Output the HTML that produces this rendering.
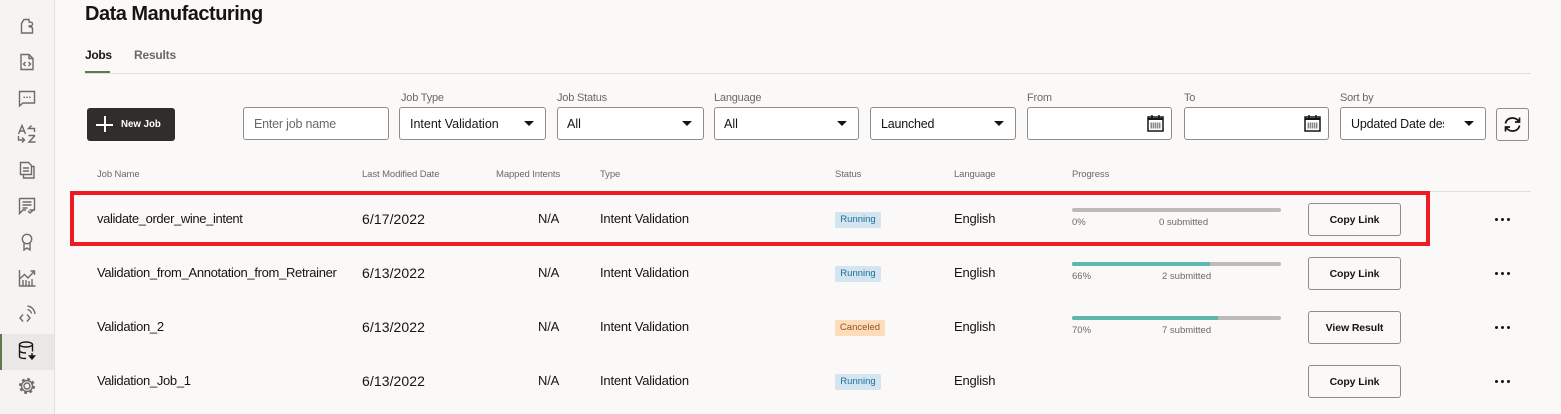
<!DOCTYPE html>
<html><head><meta charset="utf-8">
<style>
html,body{margin:0;padding:0;width:1561px;height:414px;overflow:hidden;background:#fbf9f8;font-family:"Liberation Sans",sans-serif;color:#161513}
.a{position:absolute;white-space:nowrap}
.t{position:absolute;white-space:nowrap;font-size:13px;line-height:16px;letter-spacing:-.2px;color:#161513}
.n1{letter-spacing:-.32px}
.dt{font-size:14px;letter-spacing:.08px}
.l{position:absolute;white-space:nowrap;font-size:11px;line-height:14px;color:#6b6865;letter-spacing:-.2px}
.h{position:absolute;white-space:nowrap;font-size:9.5px;line-height:12px;color:#6b6865;top:168.500px;letter-spacing:-.1px}
.f{position:absolute;box-sizing:border-box;top:107px;height:33px;background:#fff;border:1px solid #8f8c89;border-radius:3px;font-size:12.5px;line-height:32px;padding-left:10px;overflow:hidden;white-space:nowrap}
.f i{position:absolute;right:11px;top:13px;width:0;height:0;border-left:5px solid transparent;border-right:5px solid transparent;border-top:5px solid #161513}
.b{position:absolute;box-sizing:border-box;left:1308px;width:93px;height:33px;border:1px solid #8f8c89;border-radius:3px;background:#fbf9f8;font-size:10.5px;font-weight:bold;line-height:32px;text-align:center;color:#161513;letter-spacing:-.1px}
.c{position:absolute;left:835px;height:16px;border-radius:2px;font-size:9.5px;line-height:16px;text-align:center}
.r{background:#d4e5ef;color:#1a6f9f;width:46px}
.x{background:#fbdcbb;color:#95541a;width:50px}
.p{position:absolute;left:1072px;width:209px;height:4px;background:#bdbbb9;border-radius:2px}
.p b{position:absolute;left:0;top:0;height:4px;background:#5fb6ae;border-radius:2px 0 0 2px}
.s{position:absolute;white-space:nowrap;font-size:9.5px;line-height:12px;color:#6b6865}
.d{position:absolute;left:1495px;width:16px;height:4px}
.d:before{content:"";position:absolute;left:0;top:0;width:3px;height:3px;border-radius:50%;background:#161513;box-shadow:6px 0 #161513,12px 0 #161513}
svg.n{position:absolute;left:17px;width:20px;height:20px;fill:none;stroke:#6f6b68;stroke-width:1.4}
</style></head>
<body>
<div class="a" style="left:0;top:0;width:54px;height:414px;background:#f5f4f2;border-right:1px solid #e2e0de"></div>
<div class="a" style="left:0;top:334px;width:54px;height:36px;background:#e9e8e6"></div>
<div class="a" style="left:0;top:334px;width:2px;height:36px;background:#5b7a4e"></div>

<svg class="n" style="top:16px" viewBox="0 0 20 20"><path d="M4.500 17V7.500L7 3.500h5v2.200c0 1.300 3.500-.8 3.500 2.300s-3.500 1-3.500 2.300c0 1.400 3.500-.2 3.500 2.200V17z"/></svg>
<svg class="n" style="top:52px" viewBox="0 0 20 20"><path d="M4 2.500h8l4 4V17.500H4zM12 2.500v4h4M8.500 10l-2 2 2 2M11.500 10l2 2-2 2" /></svg>
<svg class="n" style="top:88px" viewBox="0 0 20 20"><path d="M2.500 3.500h15v11.500H6l-3.500 3z"/><path d="M6.500 9.300h1.500M9.300 9.300h1.500M12 9.300h1.500"/></svg>
<svg class="n" style="top:124px" viewBox="0 0 20 20"><path d="M1.500 10L5 1.500 8.500 10M3 7h4M14.500 1.500L11.500 4.500l3 0M11.500 4.500h6V8M18 11.500h-6.500M18 11.500l-6 6.500h6.500M1.500 12v4h6M5 13.500l2.500 2.500L5 18.500"/></svg>
<svg class="n" style="top:160px" viewBox="0 0 20 20"><path d="M3.500 2.500h8l3 3V14.500H3.500zM6 8h6M6 11h6M14.500 6.500H17V18H6.500v-3.500"/></svg>
<svg class="n" style="top:196px" viewBox="0 0 20 20"><path d="M2.500 2.500h15V14h-5M9 14H6l-3.500 3.500V2.500M5.500 6h9M5.500 9h9M5.500 12h5M11 15l2 2 4.500-4"/></svg>
<svg class="n" style="top:232px" viewBox="0 0 20 20"><circle cx="10" cy="7" r="4.700"/><path d="M7 11v7l3-2 3 2v-7"/></svg>
<svg class="n" style="top:268px" viewBox="0 0 20 20"><path d="M2.500 2v16h16M2.500 11L7.500 6.500l3.500 3.500 6-6.500M13.500 3h4v4M6 18v-6M9 18v-6M12 18v-5M15 18v-7"/></svg>
<svg class="n" style="top:304px" viewBox="0 0 20 20"><path d="M6 10.500L3 14l3 3.500M10 10.500l3 3.500-3 3.500M10.500 2c4 .5 7 3.500 7.500 8M10.500 5.500c2 .5 3.500 2 4 4"/></svg>
<svg class="n" style="top:340px;stroke:#161513" viewBox="0 0 20 20"><ellipse cx="9" cy="4.500" rx="6.500" ry="2.500"/><path d="M2.500 4.500v12c0 1.500 3 2 6.500 2M15.500 4.500v7M2.500 10.500c0 1.500 3 2.500 6.500 2.500M2.500 14.500"/><path d="M15 13v4M12.500 16h5l-2.500 3z" fill="#161513"/></svg>
<svg class="n" style="top:376px" viewBox="0 0 20 20"><circle cx="10" cy="10" r="3"/><circle cx="10" cy="10" r="6.500" stroke-width="3" stroke-dasharray="2.600 2.500"/><circle cx="10" cy="10" r="5.500"/></svg>

<div class="a" style="left:85px;top:2px;font-size:20px;font-weight:bold;line-height:24px;color:#161513;letter-spacing:-.5px">Data Manufacturing</div>
<div class="a" style="left:85px;top:47px;font-size:12px;font-weight:bold;line-height:16px;letter-spacing:-.3px">Jobs</div>
<div class="a" style="left:134px;top:47px;font-size:12px;font-weight:bold;line-height:16px;color:#6b6865;letter-spacing:-.2px">Results</div>
<div class="a" style="left:85px;top:73px;width:1446px;height:1px;background:#e0dfdd"></div>
<div class="a" style="left:85px;top:71px;width:25px;height:2px;background:#5b7a4e"></div>

<div class="a" style="left:87px;top:108px;width:88px;height:33px;background:#312d2a;border-radius:3px"></div>
<div class="a" style="left:96px;top:123.500px;width:17px;height:2px;background:#fff"></div>
<div class="a" style="left:103.500px;top:116px;width:2px;height:16px;background:#fff"></div>
<div class="a" style="left:121px;top:119px;font-size:9.700px;font-weight:bold;line-height:12px;color:#fff">New Job</div>

<div class="f" style="left:243px;width:146px;color:#6b6865;letter-spacing:-.2px">Enter job name</div>
<div class="l" style="left:401px;top:91px">Job Type</div>
<div class="f" style="left:399px;width:147px">Intent Validation<i></i></div>
<div class="l" style="left:557px;top:91px">Job Status</div>
<div class="f" style="left:557px;width:147px;padding-left:9px">All<i></i></div>
<div class="l" style="left:714px;top:91px">Language</div>
<div class="f" style="left:714px;width:145px;padding-left:9px">All<i></i></div>
<div class="f" style="left:870px;width:146px;letter-spacing:-.2px">Launched<i></i></div>
<div class="l" style="left:1027px;top:91px">From</div>
<div class="f" style="left:1027px;width:145px"></div>
<div class="l" style="left:1184px;top:91px">To</div>
<div class="f" style="left:1184px;width:145px"></div>
<svg class="a" style="left:1146px;top:114px" width="19" height="19" viewBox="0 0 19 19"><rect x="2" y="3" width="15" height="14" fill="#fff" stroke="#161513" stroke-width="1.500"/><path d="M2 5h15" stroke="#161513" stroke-width="2"/><path d="M6 1v3M13 1v3" stroke="#161513" stroke-width="1.500"/><path d="M4.500 8.500h10v6h-10z" fill="#8a8886"/><path d="M6.500 8.500v6M8.500 8.500v6M10.500 8.500v6M12.500 8.500v6" stroke="#fff" stroke-width=".6"/></svg>
<svg class="a" style="left:1303px;top:114px" width="19" height="19" viewBox="0 0 19 19"><rect x="2" y="3" width="15" height="14" fill="#fff" stroke="#161513" stroke-width="1.500"/><path d="M2 5h15" stroke="#161513" stroke-width="2"/><path d="M6 1v3M13 1v3" stroke="#161513" stroke-width="1.500"/><path d="M4.500 8.500h10v6h-10z" fill="#8a8886"/><path d="M6.500 8.500v6M8.500 8.500v6M10.500 8.500v6M12.500 8.500v6" stroke="#fff" stroke-width=".6"/></svg>
<div class="l" style="left:1340px;top:91px">Sort by</div>
<div class="f" style="left:1340px;width:146px;letter-spacing:-.2px"><span style="display:block;width:93px;overflow:hidden">Updated Date descending</span><i></i></div>
<div class="a" style="left:1496px;top:108px;width:33px;height:33px;box-sizing:border-box;border:1px solid #8f8c89;border-radius:3px"></div>
<svg class="a" style="left:1504px;top:116px" width="17" height="17" viewBox="0 0 17 17" fill="none" stroke="#161513" stroke-width="1.700"><path d="M1.500 7.500C2 4 5 2 8.500 2c3 0 5 1.500 6.500 3.500M15.500 1.500v4.500h-4.500M15.500 9.500c-.5 3.500-3.500 5.500-7 5.500-3 0-5-1.500-6.500-3.500M1.500 15.500V11h4.500"/></svg>

<div class="h" style="left:97px">Job Name</div>
<div class="h" style="left:362px">Last Modified Date</div>
<div class="h" style="left:496px">Mapped Intents</div>
<div class="h" style="left:600px">Type</div>
<div class="h" style="left:835px">Status</div>
<div class="h" style="left:954px">Language</div>
<div class="h" style="left:1072px">Progress</div>
<div class="a" style="left:70px;top:191px;width:1461px;height:1px;background:#e0dfdd"></div>

<div class="t n1" style="left:97px;top:211px;letter-spacing:-.38px">validate_order_wine_intent</div>
<div class="t dt" style="left:362px;top:211px">6/17/2022</div>
<div class="t" style="left:538px;top:211px">N/A</div>
<div class="t" style="left:600px;top:211px">Intent Validation</div>
<div class="c r" style="top:212px">Running</div>
<div class="t" style="left:954px;top:211px">English</div>
<div class="p" style="top:208px"></div>
<div class="s" style="left:1072px;top:217px">0%</div>
<div class="s" style="left:1159px;top:217px">0 submitted</div>
<div class="b" style="top:203px">Copy Link</div>
<div class="d" style="top:218px"></div>

<div class="t n1" style="left:97px;top:265px">Validation_from_Annotation_from_Retrainer</div>
<div class="t dt" style="left:362px;top:265px">6/13/2022</div>
<div class="t" style="left:538px;top:265px">N/A</div>
<div class="t" style="left:600px;top:265px">Intent Validation</div>
<div class="c r" style="top:266px">Running</div>
<div class="t" style="left:954px;top:265px">English</div>
<div class="p" style="top:262px"><b style="width:138px"></b></div>
<div class="s" style="left:1072px;top:271px">66%</div>
<div class="s" style="left:1162px;top:271px">2 submitted</div>
<div class="b" style="top:257px">Copy Link</div>
<div class="d" style="top:272px"></div>

<div class="t n1" style="left:97px;top:319px">Validation_2</div>
<div class="t dt" style="left:362px;top:319px">6/13/2022</div>
<div class="t" style="left:538px;top:319px">N/A</div>
<div class="t" style="left:600px;top:319px">Intent Validation</div>
<div class="c x" style="top:320px">Canceled</div>
<div class="t" style="left:954px;top:319px">English</div>
<div class="p" style="top:316px"><b style="width:146px"></b></div>
<div class="s" style="left:1072px;top:325px">70%</div>
<div class="s" style="left:1162px;top:325px">7 submitted</div>
<div class="b" style="top:311px">View Result</div>
<div class="d" style="top:326px"></div>

<div class="t n1" style="left:97px;top:373px">Validation_Job_1</div>
<div class="t dt" style="left:362px;top:373px">6/13/2022</div>
<div class="t" style="left:538px;top:373px">N/A</div>
<div class="t" style="left:600px;top:373px">Intent Validation</div>
<div class="c r" style="top:374px">Running</div>
<div class="t" style="left:954px;top:373px">English</div>
<div class="b" style="top:365px">Copy Link</div>
<div class="d" style="top:380px"></div>

<div class="a" style="left:70px;top:191px;width:1360px;height:55px;box-sizing:border-box;border:4px solid #ed1c24"></div>
</body></html>
